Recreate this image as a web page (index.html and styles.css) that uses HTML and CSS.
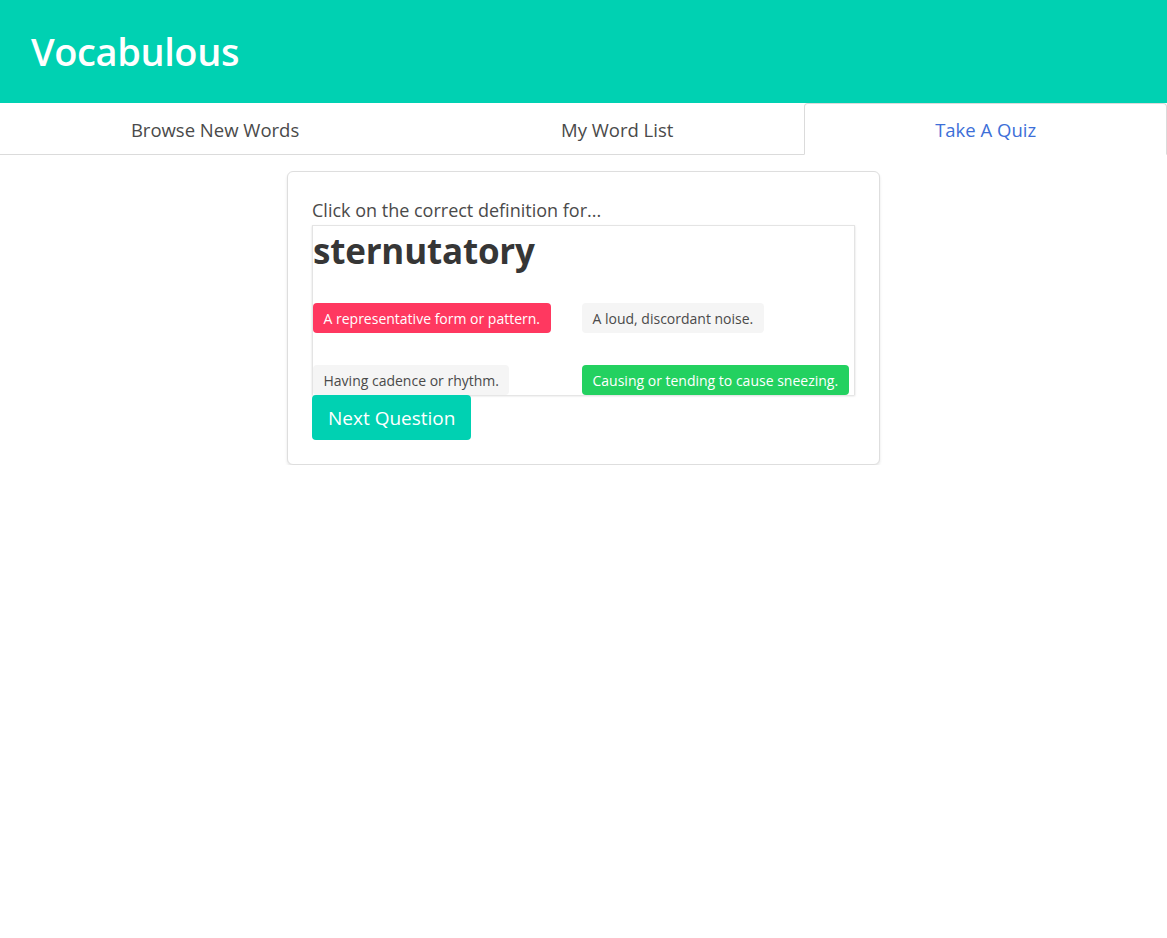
FILE: index.html
```html
<!DOCTYPE html>
<html lang="en">
<head>
<meta charset="utf-8">
<title>Vocabulous</title>
<link rel="stylesheet" href="styles.css">
</head>
<body>
<header class="hero">
  <h1 class="hero-title">Vocabulous</h1>
</header>
<nav class="tabs">
  <ul>
    <li><a href="#">Browse New Words</a></li>
    <li><a href="#">My Word List</a></li>
    <li class="is-active"><a href="#">Take A Quiz</a></li>
  </ul>
</nav>
<main class="main">
  <section class="card">
    <p class="prompt">Click on the correct definition for...</p>
    <div class="quiz-box">
      <h2 class="word">sternutatory</h2>
      <div class="choices">
        <div class="choice"><span class="tag is-danger">A representative form or pattern.</span></div>
        <div class="choice"><span class="tag">A loud, discordant noise.</span></div>
        <div class="choice"><span class="tag">Having cadence or rhythm.</span></div>
        <div class="choice"><span class="tag is-success">Causing or tending to cause sneezing.</span></div>
      </div>
    </div>
    <button class="button">Next Question</button>
  </section>
</main>
</body>
</html>
```
FILE: styles.css
```css
* { box-sizing: border-box; }
html, body { margin: 0; padding: 0; }
body {
  font-family: "Open Sans", "Noto Sans", sans-serif;
  color: #4a4a4a;
  background: #fff;
}
.hero {
  background: #00d1b2;
  height: 103px;
  display: flex;
  align-items: center;
  padding: 0 31px;
}
.hero-title {
  margin: 0;
  color: #fff;
  font-size: 38px;
  font-weight: 600;
  line-height: 1.125;
  letter-spacing: -0.4px;
}
.tabs ul {
  list-style: none;
  margin: 0;
  padding: 0;
  display: flex;
  border-bottom: 1px solid #dbdbdb;
}
.tabs li {
  flex: 1 0 auto;
  display: flex;
}
.tabs a {
  flex: 1;
  display: flex;
  justify-content: center;
  align-items: center;
  height: 52px;
  margin-bottom: -1px;
  padding: 0 16px;
  font-size: 18.5px;
  color: #4a4a4a;
  text-decoration: none;
  border: 1px solid transparent;
  border-radius: 4px 4px 0 0;
}
.tabs li.is-active a {
  color: #3d6fd8;
  border-color: #dbdbdb;
  border-bottom-color: transparent;
  background: #fff;
}
.main {
  padding-top: 16px;
  display: flex;
  justify-content: center;
}
.card {
  width: 593px;
  padding: 24px;
  border: 1px solid #dedede;
  border-radius: 6px;
  box-shadow: 0 2px 3px rgba(10,10,10,0.1);
  background: #fff;
}
.prompt {
  margin: 0;
  font-size: 18px;
  line-height: 29px;
  color: #4a4a4a;
}
.quiz-box {
  border: 1px solid #e4e4e4;
  border-bottom: none;
  box-shadow: 0 1px 2px rgba(10,10,10,0.15);
}
.word {
  margin: 0;
  font-size: 35px;
  font-weight: 700;
  color: #363636;
  line-height: 50px;
  letter-spacing: -0.2px;
}
.choices {
  display: grid;
  grid-template-columns: 269px 1fr;
  row-gap: 32px;
  padding-top: 27px;
}
.tag {
  display: inline-flex;
  align-items: center;
  height: 30px;
  padding: 0 10.5px;
  font-size: 14px;
  border-radius: 4px;
  background: #f5f5f5;
  color: #4a4a4a;
  white-space: nowrap;
}
.tag.is-danger { background: #ff3860; color: #fff; }
.tag.is-success { background: #23d160; color: #fff; }
.button {
  display: inline-flex;
  align-items: center;
  height: 45px;
  padding: 0 16px;
  border: none;
  border-radius: 4px;
  background: #00d1b2;
  color: #fff;
  font-family: inherit;
  font-size: 19px;
  cursor: pointer;
}
```
